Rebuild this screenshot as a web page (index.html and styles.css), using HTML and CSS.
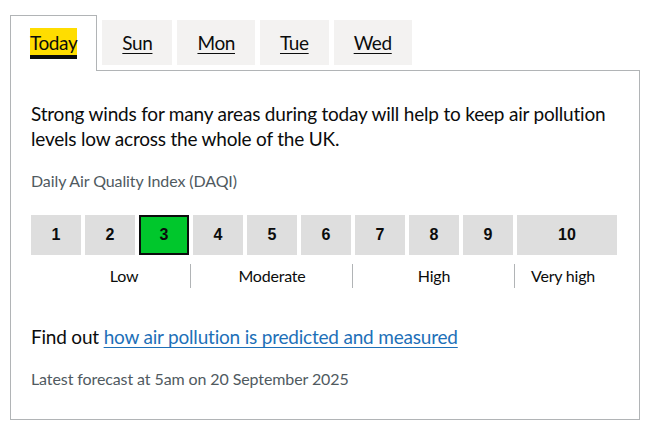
FILE: index.html
```html
<!DOCTYPE html>
<html lang="en">
<head>
<meta charset="utf-8">
<title>Air pollution forecast</title>
<link rel="stylesheet" href="styles.css">
</head>
<body>
<div class="page">
  <div class="tabs">
    <ul class="tabs-list">
      <li class="tab tab--selected"><a class="tab-link tab-link--focus" href="#today">Today</a></li>
      <li class="tab"><a class="tab-link" href="#sun">Sun</a></li>
      <li class="tab"><a class="tab-link" href="#mon">Mon</a></li>
      <li class="tab"><a class="tab-link" href="#tue">Tue</a></li>
      <li class="tab"><a class="tab-link" href="#wed">Wed</a></li>
    </ul>
    <div class="panel" id="today">
      <p class="body-text">Strong winds for many areas during today will help to keep air pollution levels low across the whole of the UK.</p>
      <p class="caption caption--daqi">Daily Air Quality Index (DAQI)</p>
      <div class="daqi">
        <ol class="daqi-scale">
          <li class="daqi-cell">1</li>
          <li class="daqi-cell">2</li>
          <li class="daqi-cell daqi-cell--current">3</li>
          <li class="daqi-cell">4</li>
          <li class="daqi-cell">5</li>
          <li class="daqi-cell">6</li>
          <li class="daqi-cell">7</li>
          <li class="daqi-cell">8</li>
          <li class="daqi-cell">9</li>
          <li class="daqi-cell">10</li>
        </ol>
        <ul class="daqi-bands">
          <li class="band band--low">Low</li>
          <li class="band band--moderate">Moderate</li>
          <li class="band band--high">High</li>
          <li class="band band--very-high">Very high</li>
        </ul>
      </div>
      <p class="body-text body-text--find">Find out <a class="link" href="#how">how air pollution is predicted and measured</a></p>
      <p class="caption">Latest forecast at 5am on 20 September 2025</p>
    </div>
  </div>
</div>
</body>
</html>
```
FILE: styles.css
```css
html, body {
  margin: 0;
  padding: 0;
  background: #ffffff;
}

body {
  font-family: "Lato", "Liberation Sans", sans-serif;
  color: #0b0c0c;
  letter-spacing: -0.2px;
}

.page {
  padding: 15px 0 0 10px;
}

.tabs {
  width: 630px;
}

.tabs-list {
  display: flex;
  align-items: flex-start;
  list-style: none;
  margin: 0;
  padding: 0;
}

.tab {
  margin: 5px 5px 0 0;
  padding: 10px 20px;
  background: #f3f2f1;
  font-size: 19px;
  line-height: 25px;
  text-align: center;
  letter-spacing: -0.4px;
}

.tab--selected {
  position: relative;
  z-index: 1;
  margin: 0 5px -1px 0;
  padding: 14px 19px 16px;
  border: 1px solid #b1b4b6;
  border-bottom: 0;
  background: #ffffff;
}

.tab-link {
  color: #0b0c0c;
  text-decoration: underline;
  text-decoration-thickness: 1px;
  text-underline-offset: 3px;
}

.tab-link--focus {
  display: inline-block;
  background: #ffdd00;
  box-shadow: 0 -2px #ffdd00, 0 4px #0b0c0c;
  text-decoration: none;
}

.panel {
  border: 1px solid #b1b4b6;
  padding: 30px 20px;
}

.body-text {
  margin: 0 0 20px;
  font-size: 19px;
  line-height: 25px;
}

.caption {
  margin: 0;
  font-size: 16px;
  line-height: 20px;
  color: #505a5f;
  letter-spacing: -0.1px;
}

.caption--daqi {
  margin-bottom: 24px;
}

.daqi {
  margin-bottom: 36px;
}

.daqi-scale,
.daqi-bands {
  list-style: none;
  margin: 0;
  padding: 0;
  display: grid;
  grid-template-columns: repeat(9, 50px) 100px;
  column-gap: 4px;
}

.daqi-cell {
  height: 40px;
  box-sizing: border-box;
  display: flex;
  align-items: center;
  justify-content: center;
  background: #dedede;
  font-family: "Liberation Sans", Arial, sans-serif;
  font-weight: bold;
  font-size: 16px;
  letter-spacing: 0;
}

.daqi-cell--current {
  background: #00c72c;
  border: 2px solid #0b0c0c;
}

.daqi-bands {
  margin-top: 9px;
}

.band {
  font-size: 16px;
  line-height: 24px;
  text-align: center;
}

.band--low {
  grid-column: 1 / span 3;
  padding-left: 28px;
}

.band--moderate {
  grid-column: 4 / span 3;
  position: relative;
}

.band--high {
  grid-column: 7 / span 3;
  position: relative;
}

.band--very-high {
  grid-column: 10;
  position: relative;
  padding-right: 8px;
}

.band--moderate::before,
.band--high::before,
.band--very-high::before {
  content: "";
  position: absolute;
  left: -3px;
  top: 0;
  bottom: 0;
  border-left: 1px solid #b1b4b6;
}

.link {
  color: #1d70b8;
  text-decoration: underline;
  text-decoration-thickness: 1px;
  text-underline-offset: 3px;
}
```
